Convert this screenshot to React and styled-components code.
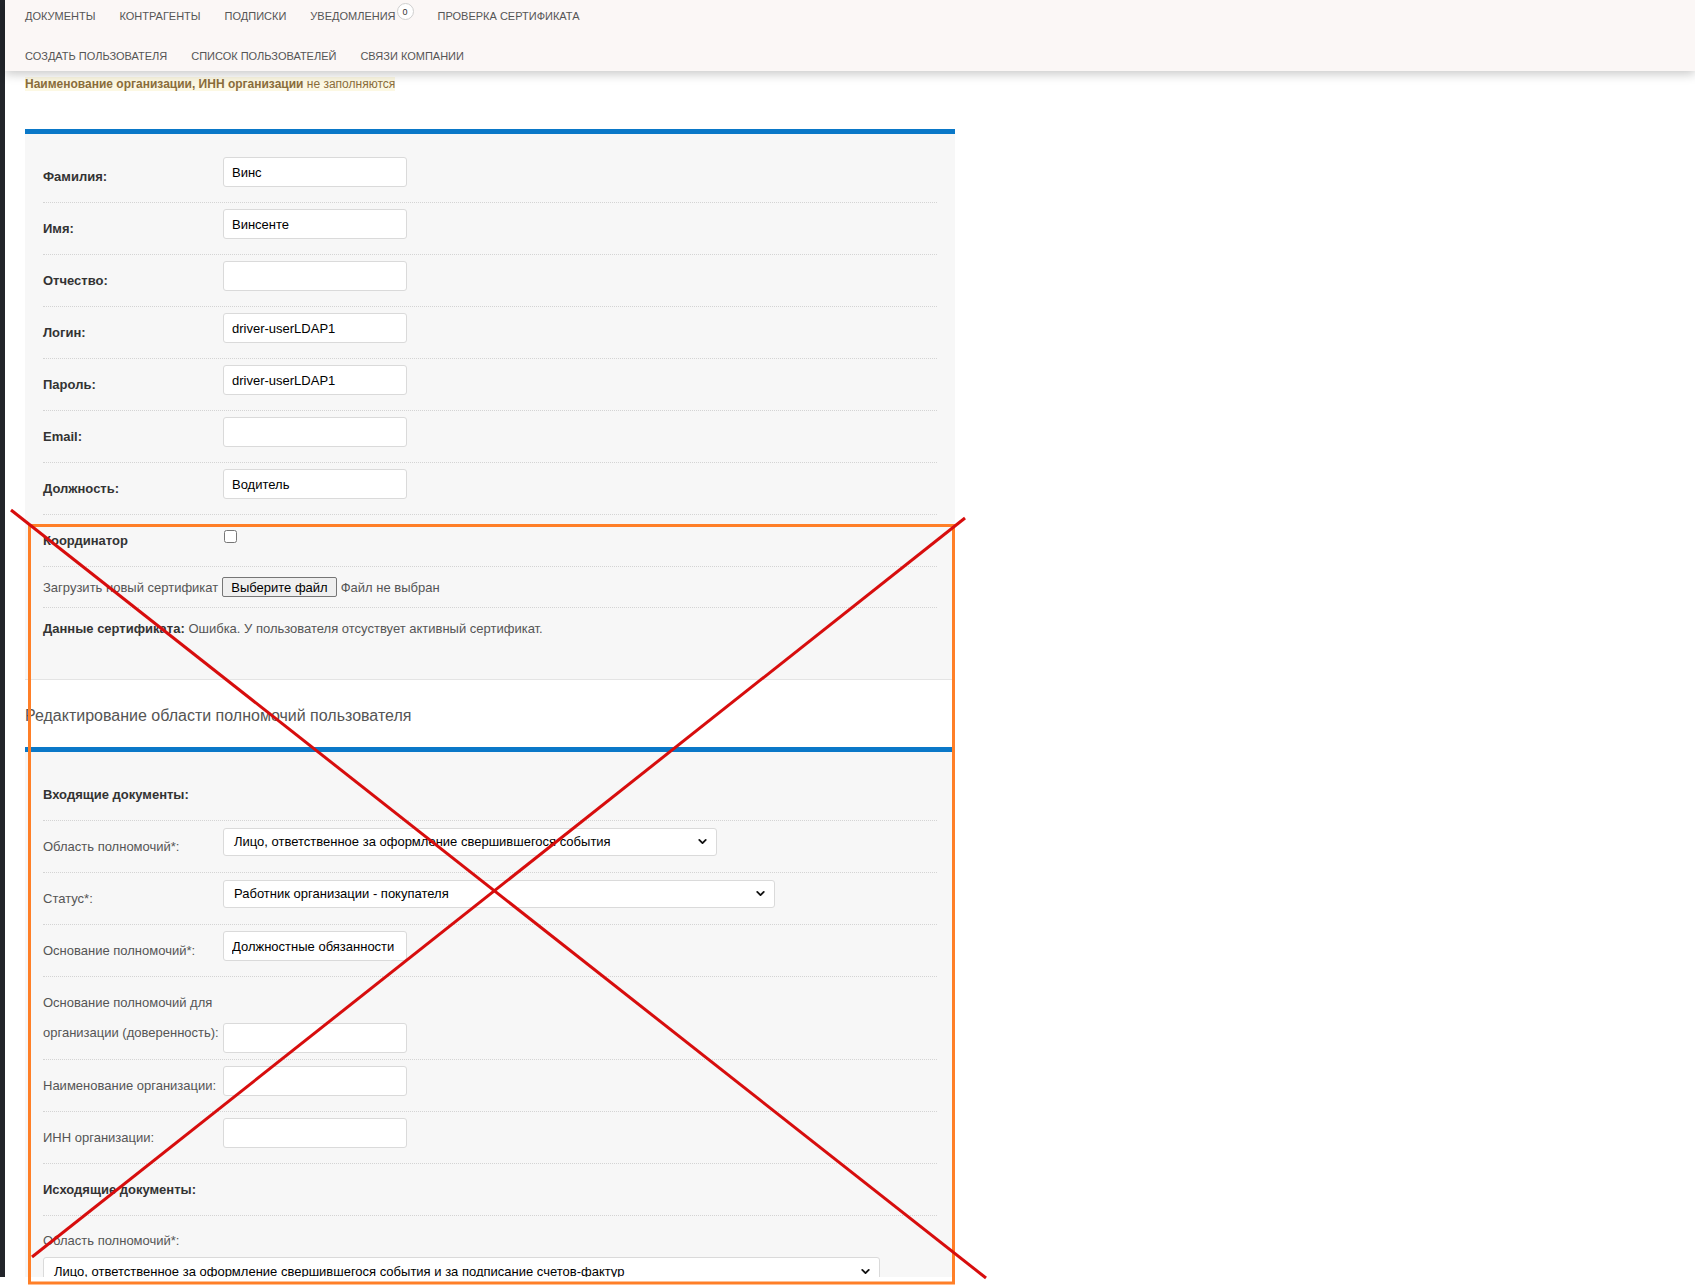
import React from "react";
import styled, { createGlobalStyle } from "styled-components";
import { ChevronDown } from "lucide-react";

const GlobalStyle = createGlobalStyle`
  html, body {
    margin: 0;
    padding: 0;
    background: #fff;
  }
  body {
    font-family: "Liberation Sans", Arial, sans-serif;
  }
  * {
    box-sizing: border-box;
  }
`;

const Canvas = styled.div`
  position: relative;
  width: 1695px;
  height: 1286px;
  overflow: hidden;
`;

const Screen = styled.div`
  display: flex;
  height: 1277px;
  overflow: hidden;
`;

const SideStrip = styled.div`
  width: 5px;
  flex-shrink: 0;
  background: #22252a;
`;

const Main = styled.div`
  flex: 1;
  min-width: 0;
`;

const Header = styled.header`
  position: relative;
  z-index: 1;
  height: 71px;
  padding: 1px 20px 0;
  display: flex;
  flex-direction: column;
  row-gap: 10px;
  background: #fbf7f6;
  box-shadow: 0 3px 10px rgba(0, 0, 0, 0.22);
`;

const NavRow = styled.nav`
  display: flex;
  align-items: center;
  gap: 24px;
  height: 30px;
`;

const NavLink = styled.a`
  display: inline-flex;
  align-items: center;
  font-size: 11px;
  color: #555;
  text-transform: uppercase;
  text-decoration: none;
  white-space: nowrap;
`;

const Badge = styled.span`
  display: inline-flex;
  align-items: center;
  justify-content: center;
  width: 17px;
  height: 17px;
  margin: 0 0 9px 1px;
  border: 1px solid #cfcfcf;
  border-radius: 50%;
  background: #fff;
  font-size: 9px;
  color: #333;
`;

const Content = styled.div`
  padding: 0 20px;
`;

const Notice = styled.p`
  margin: 6px 0 0;
  font-size: 12px;
  line-height: 14px;
  color: #8a6d3b;

  span {
    background: #fcf8e3;
  }
`;

const Panel = styled.section`
  width: 930px;
  margin-top: ${(p) => p.$top || 0}px;
  padding: 17px 18px ${(p) => p.$bottom || 0}px;
  background: #f7f7f7;
  border-top: 5px solid #0a78c8;
  border-bottom: ${(p) => (p.$closed ? "1px solid #e4e4e4" : "none")};
`;

const Heading = styled.h3`
  margin: 0;
  padding: 26px 0 21px;
  font-size: 16px;
  line-height: 20px;
  font-weight: normal;
  color: #555;
`;

const Row = styled.div`
  display: flex;
  align-items: center;
  gap: ${(p) => p.$gap || 0}px;
  min-height: ${(p) => p.$height || 52}px;
  border-bottom: ${(p) => (p.$last ? "none" : "1px dotted #d4d4d4")};
`;

const Label = styled.label`
  width: ${(p) => (p.$free ? "auto" : "180px")};
  flex-shrink: 0;
  font-size: 13px;
  line-height: ${(p) => (p.$lh ? `${p.$lh}px` : "normal")};
  font-weight: ${(p) => (p.$bold ? "bold" : "normal")};
  color: ${(p) => (p.$bold ? "#333" : "#555")};
  white-space: nowrap;
`;

const Text = styled.span`
  font-size: 13px;
  color: #555;
  white-space: nowrap;

  b {
    color: #333;
  }
`;

const Input = styled.input`
  width: 184px;
  height: 30px;
  margin: 0 0 ${(p) => p.$mb ?? 10}px;
  padding: 1px 8px 0;
  align-self: ${(p) => (p.$end ? "flex-end" : "center")};
  border: 1px solid #dadada;
  border-radius: 3px;
  background: #fff;
  font-family: inherit;
  font-size: 13px;
  color: #000;
  outline: none;
`;

const Select = styled.div`
  display: flex;
  align-items: center;
  justify-content: space-between;
  width: ${(p) => p.$w}px;
  height: 28px;
  margin-bottom: ${(p) => p.$mb ?? 10}px;
  margin-top: ${(p) => p.$mt || 0}px;
  padding: 0 7px 0 10px;
  border: 1px solid #dadada;
  border-radius: 3px;
  background: #fff;
  font-size: 13px;
  color: #000;
  white-space: nowrap;
`;

const Checkbox = styled.input`
  width: 13px;
  height: 13px;
  margin: 0 0 8px 1px;
`;

const FileButton = styled.button`
  height: 20px;
  padding: 0 8px;
  border: 1px solid #767676;
  border-radius: 2px;
  background: #efefef;
  font-family: inherit;
  font-size: 13px;
  color: #000;
`;

const StackRow = styled.div`
  padding-top: 15px;
`;

const Overlay = styled.svg`
  position: absolute;
  left: 0;
  top: 0;
  pointer-events: none;
`;

const personFields = [
  ["Фамилия:", "Винс"],
  ["Имя:", "Винсенте"],
  ["Отчество:", ""],
  ["Логин:", "driver-userLDAP1"],
  ["Пароль:", "driver-userLDAP1"],
  ["Email:", ""],
  ["Должность:", "Водитель"],
];

const Arrow = () => <ChevronDown size={13} strokeWidth={3.4} color="#111" />;

export default function App() {
  return (
    <Canvas>
      <GlobalStyle />
      <Screen>
        <SideStrip />
        <Main>
          <Header>
            <NavRow>
              <NavLink>Документы</NavLink>
              <NavLink>Контрагенты</NavLink>
              <NavLink>Подписки</NavLink>
              <NavLink>
                Уведомления<Badge>0</Badge>
              </NavLink>
              <NavLink>Проверка сертификата</NavLink>
            </NavRow>
            <NavRow>
              <NavLink>Создать пользователя</NavLink>
              <NavLink>Список пользователей</NavLink>
              <NavLink>Связи компании</NavLink>
            </NavRow>
          </Header>

          <Content>
            <Notice>
              <span>
                <b>Наименование организации, ИНН организации</b> не заполняются
              </span>
            </Notice>

            <Panel $top={38} $bottom={30} $closed>
              {personFields.map(([label, value]) => (
                <Row key={label}>
                  <Label $bold>{label}</Label>
                  <Input readOnly value={value} />
                </Row>
              ))}
              <Row>
                <Label $bold>Координатор</Label>
                <Checkbox type="checkbox" readOnly />
              </Row>
              <Row $height={41} $gap={4}>
                <Text>Загрузить новый сертификат</Text>
                <FileButton>Выберите файл</FileButton>
                <Text>Файл не выбран</Text>
              </Row>
              <Row $height={41} $last>
                <Text>
                  <b>Данные сертификата:</b> Ошибка. У пользователя отсуствует
                  активный сертификат.
                </Text>
              </Row>
            </Panel>

            <Heading>Редактирование области полномочий пользователя</Heading>

            <Panel $bottom={40}>
              <Row>
                <Label $bold>Входящие документы:</Label>
              </Row>
              <Row>
                <Label>Область полномочий*:</Label>
                <Select $w={494}>
                  Лицо, ответственное за оформление свершившегося события
                  <Arrow />
                </Select>
              </Row>
              <Row>
                <Label>Статус*:</Label>
                <Select $w={552}>
                  Работник организации - покупателя
                  <Arrow />
                </Select>
              </Row>
              <Row>
                <Label>Основание полномочий*:</Label>
                <Input readOnly value="Должностные обязанности" />
              </Row>
              <Row $height={83}>
                <Label $lh={30}>
                  Основание полномочий для
                  <br />
                  организации (доверенность):
                </Label>
                <Input readOnly value="" $end $mb={6} />
              </Row>
              <Row>
                <Label>Наименование организации:</Label>
                <Input readOnly value="" />
              </Row>
              <Row>
                <Label>ИНН организации:</Label>
                <Input readOnly value="" />
              </Row>
              <Row>
                <Label $bold>Исходящие документы:</Label>
              </Row>
              <StackRow>
                <Label $free $lh={20}>
                  Область полномочий*:
                </Label>
                <Select $w={837} $mt={6}>
                  Лицо, ответственное за оформление свершившегося события и за
                  подписание счетов-фактур
                  <Arrow />
                </Select>
              </StackRow>
            </Panel>
          </Content>
        </Main>
      </Screen>

      <Overlay width="1695" height="1286" viewBox="0 0 1695 1286">
        <rect
          x="29.5"
          y="525.5"
          width="924"
          height="757.5"
          fill="none"
          stroke="#ff7f27"
          strokeWidth="3"
        />
        <line x1="11" y1="510" x2="986" y2="1278" stroke="#d70d0d" strokeWidth="3" />
        <line x1="965" y1="518" x2="32" y2="1257" stroke="#d70d0d" strokeWidth="3" />
      </Overlay>
    </Canvas>
  );
}
